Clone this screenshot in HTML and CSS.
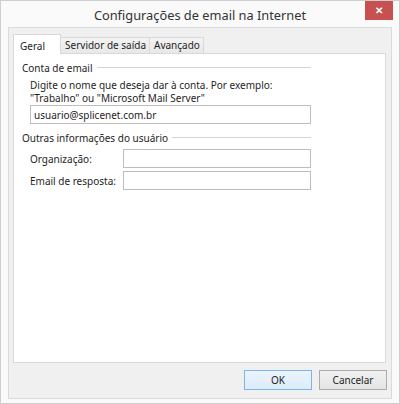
FILE: index.html
```html
<!DOCTYPE html>
<html lang="pt-BR">
<head>
    <meta charset="UTF-8">
    <title>Configurações de email na Internet</title>
    <link rel="stylesheet" href="styles.css">
</head>
<body>
    <div class="window">
        <div class="titlebar">
            <span></span>
            <h1>Configurações de email na Internet</h1>
            <button class="close" title="Fechar">&#x2715;</button>
        </div>
        <div class="dialog">
            <div class="tabs">
                <div class="tab active">Geral</div>
                <div class="tab">Servidor de saída</div>
                <div class="tab">Avançado</div>
            </div>
            <div class="panel">
                <div class="form">
                    <div class="group-title"><span>Conta de email</span><i></i></div>
                    <div class="group">
                        <p class="hint">Digite o nome que deseja dar à conta. Por exemplo:</p>
                        <p class="hint">"Trabalho" ou "Microsoft Mail Server"</p>
                        <input type="text" class="wide" value="usuario@splicenet.com.br">
                    </div>

                    <div class="group-title second"><span>Outras informações do usuário</span><i></i></div>
                    <div class="group">
                        <div class="row">
                            <label for="org">Organização:</label>
                            <input type="text" id="org">
                        </div>
                        <div class="row">
                            <label for="reply">Email de resposta:</label>
                            <input type="text" id="reply">
                        </div>
                    </div>
                </div>
            </div>
            <div class="buttons">
                <button class="btn default">OK</button>
                <button class="btn">Cancelar</button>
            </div>
        </div>
    </div>
</body>
</html>
```

FILE: styles.css
```css
body {
    margin: 0;
    background: #ffffff;
    font-family: "Noto Sans", "Open Sans", sans-serif;
    font-size: 10px;
    color: #1e1e1e;
}
.window {
    width: 400px;
    height: 404px;
    box-sizing: border-box;
    border: 1px solid #cfcfcf;
    background: #fafafa;
    padding: 0 7px 4px;
    display: flex;
    flex-direction: column;
}
.titlebar {
    height: 26px;
    display: grid;
    grid-template-columns: 1fr auto 1fr;
    align-items: start;
}
.titlebar h1 {
    margin: 0;
    padding-top: 5px;
    font-size: 12.8px;
    font-weight: normal;
    color: #333;
    line-height: 18px;
}
.close {
    justify-self: end;
    margin-right: -1px;
    width: 28px;
    height: 19px;
    border: none;
    padding: 0;
    background: #c75050;
    color: #fff;
    font-size: 10px;
    font-weight: bold;
    line-height: 19px;
}

.dialog {
    flex: 1;
    border: 1px solid #dadada;
    background: #f0f0f0;
    padding: 6px 5px 8px 4px;
    display: flex;
    flex-direction: column;
}
.tabs {
    display: flex;
    align-items: flex-end;
    height: 20px;
    margin-bottom: -1px;
    position: relative;
    z-index: 1;
}
.tab {
    height: 16px;
    line-height: 15px;
    padding: 0 3px 0 4px;
    margin-bottom: 1px;
    margin-left: -1px;
    border: 1px solid #d9d9d9;
    border-bottom: none;
    background: linear-gradient(#f3f3f3, #e8e8e8);
    box-sizing: border-box;
}
.tab.active {
    height: 20px;
    line-height: 22px;
    margin-left: 0;
    margin-bottom: 0;
    padding: 0 15px 0 6px;
    background: #fff;
    position: relative;
    z-index: 2;
}
.panel {
    flex: 1;
    border: 1px solid #d9d9d9;
    background: #fff;
    padding: 7px 8px;
}
.form {
    width: 289px;
}
.group-title {
    display: flex;
    align-items: center;
    height: 13px;
}
.group-title i {
    flex: 1;
    height: 1px;
    background: #d5d5d5;
    margin-left: 4px;
}
.group-title.second {
    margin-top: 7px;
}
.group {
    padding-left: 8px;
}
.hint {
    margin: 0;
    height: 13px;
    line-height: 13px;
}
.hint:first-child {
    margin-top: 5px;
}
input {
    display: block;
    box-sizing: border-box;
    height: 19px;
    border: 1px solid #bdbdbd;
    padding: 0 3px;
    font: inherit;
    color: #1e1e1e;
    background: #fff;
}
input.wide {
    width: 100%;
}
.row {
    display: flex;
    align-items: center;
    margin-top: 3px;
}
.row:first-child {
    margin-top: 5px;
}
.row label {
    width: 93px;
    white-space: nowrap;
}
.row input {
    flex: 1;
}

.buttons {
    display: flex;
    justify-content: flex-end;
    gap: 7px;
    margin-top: 7px;
    margin-right: -1px;
}
.btn {
    width: 68px;
    height: 20px;
    border: 1px solid #acacac;
    background: linear-gradient(#f0f0f0, #e5e5e5);
    font: inherit;
    color: #1e1e1e;
    padding: 0;
}
.btn.default {
    border-color: #7eb4ea;
    background: linear-gradient(#ecf4fc, #dcecfc);
}
```
